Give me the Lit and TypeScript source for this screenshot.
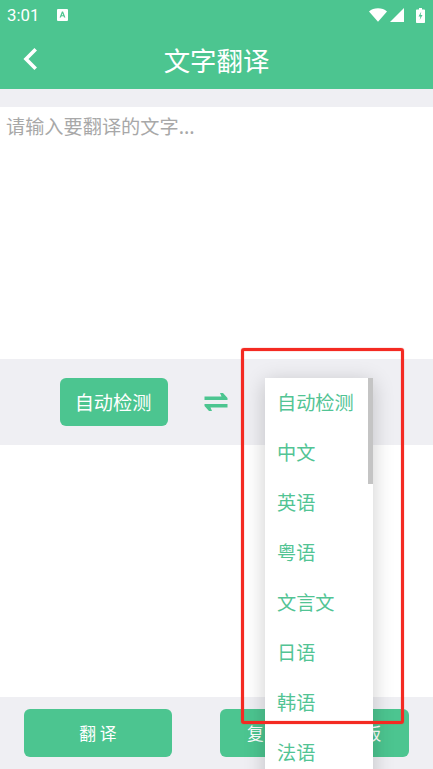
import { LitElement, html, css } from "lit";
import { customElement } from "lit/decorators.js";

const LANGS = ["自动检测", "中文", "英语", "粤语", "文言文", "日语", "韩语", "法语"];

@customElement("app-root")
export class AppRoot extends LitElement {
  static styles = css`
    :host {
      display: block;
      position: relative;
      width: 433px;
      height: 769px;
      overflow: hidden;
      background: #efeff3;
      font-family: "Noto Sans CJK SC", "Noto Sans", sans-serif;
    }
    .page {
      display: flex;
      flex-direction: column;
      height: 769px;
    }
    .head {
      height: 89px;
      background: #4cc590;
      color: #fff;
      display: flex;
      flex-direction: column;
    }
    .status {
      height: 30px;
      display: flex;
      align-items: center;
      padding: 0 8px 0 7px;
      gap: 18px;
      font-family: Roboto, sans-serif;
      font-size: 16.8px;
    }
    .status .right {
      margin-left: auto;
      display: flex;
      align-items: center;
      gap: 3px;
    }
    .status svg { display: block; }
    .battery { margin-left: 9px; }
    .bar {
      flex: 1;
      position: relative;
      display: flex;
      align-items: center;
      justify-content: center;
      font-size: 26.4px;
      padding-bottom: 1px;
    }
    .back {
      position: absolute;
      left: 21px;
      top: 17px;
    }
    .gap { height: 18px; }
    .input {
      height: 252px;
      background: #fff;
      box-sizing: border-box;
      padding: 6px 6px;
      font-size: 19.2px;
      line-height: 27px;
      color: #a8a8a8;
    }
    .switch {
      height: 86px;
      display: flex;
      align-items: center;
      box-sizing: border-box;
      padding: 0 0 0 60px;
    }
    .btn {
      background: #4cc590;
      color: #fff;
      border-radius: 6px;
      display: flex;
      align-items: center;
      justify-content: center;
      height: 48px;
    }
    .lang {
      width: 108px;
      box-sizing: border-box;
      padding: 0 2px 1px 0;
      font-size: 19.2px;
    }
    .swap {
      margin-left: 36px;
      display: block;
    }
    .output {
      height: 252px;
      background: #fff;
    }
    .actions {
      flex: 1;
      display: flex;
      align-items: flex-start;
      padding: 12px 24px 0;
      gap: 48px;
      font-size: 16.8px;
    }
    .act1 { width: 148px; }
    .act2 {
      width: 189px;
      box-sizing: border-box;
      padding-left: 6px;
      letter-spacing: 6.7px;
    }
    .popup {
      position: absolute;
      left: 265px;
      top: 378px;
      width: 108px;
      bottom: -20px;
      background: #fff;
      box-shadow: 0 4px 20px rgba(0, 0, 0, 0.2);
      overflow: hidden;
    }
    .item {
      height: 50px;
      box-sizing: border-box;
      display: flex;
      align-items: center;
      padding: 0 0 2px 12px;
      font-size: 19.2px;
      color: #52c494;
    }
    .thumb {
      position: absolute;
      right: 0;
      top: 0;
      width: 5px;
      height: 106px;
      background: #c4c4c4;
    }
    .mark {
      position: absolute;
      left: 241px;
      top: 348px;
      width: 163px;
      height: 376px;
      box-sizing: border-box;
      border: 3px solid #f42a22;
      border-radius: 3px;
      box-shadow: 0 0 1px #f42a22, inset 0 0 1px #f42a22;
    }
  `;

  render() {
    return html`
      <div class="page">
        <div class="head">
          <div class="status">
            <span>3:01</span>
            <svg width="11" height="12" viewBox="0 0 11 12">
              <path fill="#fff" fill-rule="evenodd" d="M1 0h9a1 1 0 0 1 1 1v10a1 1 0 0 1-1 1H1a1 1 0 0 1-1-1V1a1 1 0 0 1 1-1zM4.900 2.500 2.600 8.500h1.400l.4-1.200h2.200l.4 1.200h1.400L6.100 2.500zM5.500 4.300l.7 2H4.800z"/>
            </svg>
            <div class="right">
              <svg width="18" height="14" viewBox="0 0 19 14">
                <path fill="#fff" d="M9.500 14 0 3.200C2.500 1.200 5.800 0 9.500 0s7 1.200 9.500 3.200z"/>
              </svg>
              <svg width="14" height="14" viewBox="0 0 14 14">
                <path fill="#fff" d="M14 0v14H0z"/>
              </svg>
              <svg class="battery" width="9" height="15" viewBox="0 0 9 15">
                <path fill="#fff" fill-rule="evenodd" d="M3 0h3v1.500h2.200a.8.8 0 0 1 .8.800v11.900a.8.8 0 0 1-.8.800H.8a.8.8 0 0 1-.8-.800V2.300a.8.8 0 0 1 .8-.800H3zM5.300 3.500 2.500 8.500h1.900l-.7 3.500 2.800-5H4.600z"/>
              </svg>
            </div>
          </div>
          <div class="bar">
            <svg class="back" width="18" height="24" viewBox="0 0 18 24">
              <path d="M14.700 2.300 5 12l9.700 9.700" fill="none" stroke="#fff" stroke-width="3.600"/>
            </svg>
            <span>文字翻译</span>
          </div>
        </div>
        <div class="gap"></div>
        <div class="input">请输入要翻译的文字...</div>
        <div class="switch">
          <div class="btn lang">自动检测</div>
          <svg class="swap" width="24" height="20" viewBox="0 0 24 20">
            <path fill="#4cc590" d="M16 1 19 1 23.500 6V8H.5V4.500H17.500zM8 19 5 19 .5 14V12H23.500V15.500H6.500z"/>
          </svg>
        </div>
        <div class="output"></div>
        <div class="actions">
          <div class="btn act1">翻 译</div>
          <div class="btn act2">复制到剪贴板</div>
        </div>
      </div>
      <div class="popup">
        ${LANGS.map((l) => html`<div class="item">${l}</div>`)}
        <div class="thumb"></div>
      </div>
      <div class="mark"></div>
    `;
  }
}
